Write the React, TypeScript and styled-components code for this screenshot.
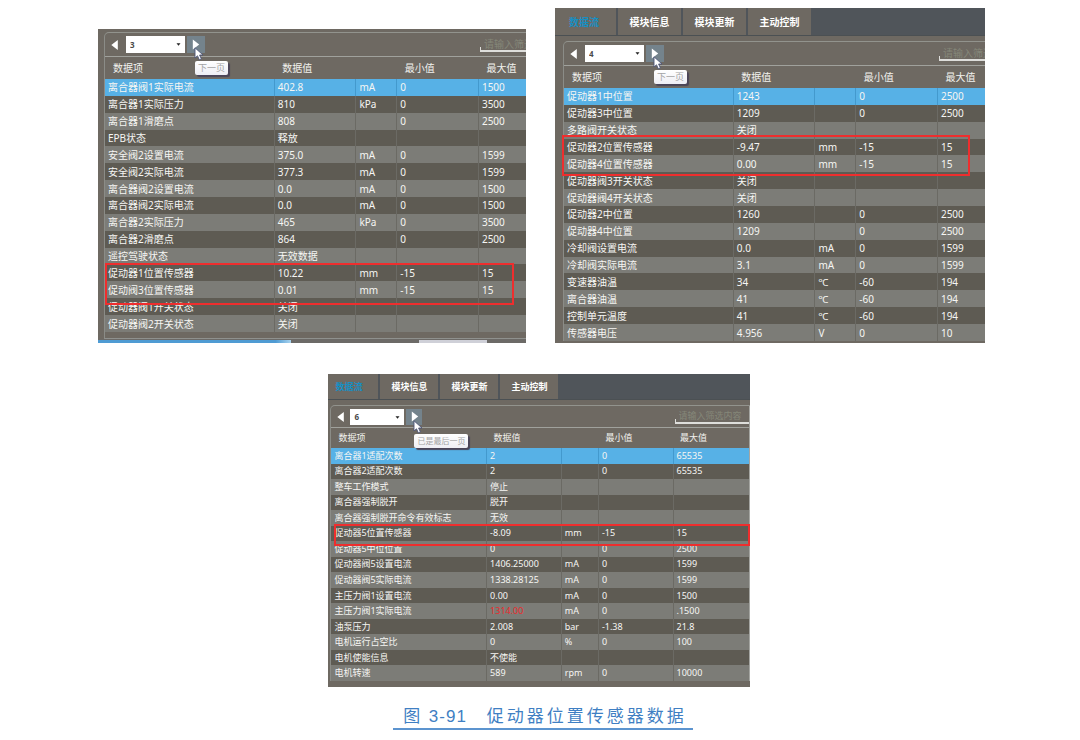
import React from "react";
import styled, { createGlobalStyle, css } from "styled-components";

const GlobalStyle = createGlobalStyle`
  *, *::before, *::after { box-sizing: border-box; }
  body {
    margin: 0;
    background: #ffffff;
    font-family: "Noto Sans", "Noto Sans CJK SC", sans-serif;
  }
`;

type Density = "regular" | "compact";

const metrics = {
  regular: { font: 10, tip: 9, headInset: 8, tabs: 28, tab: 63, firstTab: 61, firstInset: 14, tool: 24, head: 22, control: 17, prev: 21, select: 59, next: 18, search: 46 },
  compact: { font: 9, tip: 8, headInset: 7, tabs: 26, tab: 58, firstTab: 50, firstInset: 7, tool: 22, head: 20, control: 16, prev: 19, select: 54, next: 16, search: 74 },
};

const columns = {
  regular: ["40.2%", "19.4%", "9.7%", "19.4%", "11.3%"],
  compact: ["37.2%", "17.9%", "8.9%", "17.9%", "18.1%"],
};

const Page = styled.main`
  display: flex;
  flex-direction: column;
  align-items: center;
  padding-top: 8px;
`;

const TopRow = styled.div`
  display: grid;
  grid-template-columns: 428fr 430fr;
  gap: 29px;
  align-items: end;
  width: 100%;
  padding: 0 95px 0 98px;
`;

const BottomRow = styled.div`
  width: 39%;
  margin: 31px 2px 0 0;
`;

const Window = styled.section<{ $density: Density }>`
  background: #6e6962;
  color: #f2f2ee;
  font-size: ${(p) => metrics[p.$density].font}px;
  line-height: 14px;
  overflow: hidden;
`;

const TabBar = styled.nav<{ $density: Density }>`
  display: flex;
  gap: 2px;
  height: ${(p) => metrics[p.$density].tabs}px;
  background: #50555a;
  border-bottom: 1px solid #4b5053;
`;

const Tab = styled.button<{ $density: Density; $active?: boolean }>`
  width: ${(p) => metrics[p.$density].tab}px;
  padding: 0;
  border: 0;
  background: #6e6962;
  color: #ffffff;
  font: inherit;
  font-weight: 700;
  ${(p) =>
    p.$active &&
    css`
      width: ${metrics[p.$density].firstTab}px;
      padding-left: ${metrics[p.$density].firstInset}px;
      text-align: left;
      color: #168fc4;
    `}
`;

const Body = styled.div<{ $top: number; $left: number; $bottom: number }>`
  padding: ${(p) => p.$top}px 0 ${(p) => p.$bottom}px ${(p) => p.$left}px;
`;

const Frame = styled.div<{ $closed?: boolean; $edge?: boolean }>`
  border-top: 1px solid #92938d;
  border-left: 1px solid #8b8c87;
  border-top-left-radius: 5px;
  ${(p) => p.$closed && "border-bottom: 1px solid #8f918e; padding-bottom: 6px;"}
  ${(p) => p.$edge && "border-right: 1px solid #a5a6a2;"}
`;

const Toolbar = styled.div<{ $density: Density }>`
  display: flex;
  align-items: center;
  height: ${(p) => metrics[p.$density].tool}px;
  border-bottom: 1px solid #a0a19c;
`;

const PrevButton = styled.button<{ $density: Density }>`
  display: flex;
  align-items: center;
  width: ${(p) => metrics[p.$density].prev}px;
  height: ${(p) => metrics[p.$density].control}px;
  padding: 0 0 0 6px;
  border: 0;
  background: none;
`;

const PageSelect = styled.label`
  position: relative;
  display: flex;
  margin-right: 2px;
`;

const Select = styled.select<{ $density: Density }>`
  appearance: none;
  width: ${(p) => metrics[p.$density].select}px;
  height: ${(p) => metrics[p.$density].control}px;
  padding: 0 4px;
  border: 0;
  border-radius: 0;
  background: #ffffff;
  color: #4a4a4a;
  font: inherit;
  font-size: 8px;
  font-weight: 700;
`;

const Caret = styled.svg`
  position: absolute;
  top: 7px;
  right: 4px;
  pointer-events: none;
`;

const NextWrap = styled.div`
  position: relative;
  display: flex;
`;

const NextButton = styled.button<{ $density: Density }>`
  display: flex;
  align-items: center;
  width: ${(p) => metrics[p.$density].next}px;
  height: ${(p) => metrics[p.$density].control}px;
  padding: 0 0 0 5px;
  border: 0;
  background: #74838c;
`;

const Pointer = styled.svg`
  position: absolute;
  top: 11px;
  left: 7px;
  z-index: 3;
`;

const Tooltip = styled.span<{ $density: Density }>`
  position: absolute;
  top: 25px;
  left: 8px;
  z-index: 2;
  padding: 0 3px;
  border-radius: 2px;
  background: linear-gradient(#ffffff, #eeeef4);
  box-shadow: 2px 2px 1px #4b4558;
  color: #a3a3a3;
  font-size: ${(p) => metrics[p.$density].tip}px;
  line-height: 14px;
  white-space: nowrap;
`;

const Search = styled.input<{ $density: Density }>`
  width: ${(p) => metrics[p.$density].search}px;
  height: 15px;
  margin-left: auto;
  padding: 0 0 0 4px;
  border: 0;
  border-bottom: 2px solid #dededb;
  border-radius: 0;
  background: linear-gradient(#dededb, #dededb) left bottom / 1px 3px no-repeat;
  color: #ffffff;
  font: inherit;
  outline: 0;
  &::placeholder { color: #858779; opacity: 1; }
`;

const TableWrap = styled.div`
  position: relative;
`;

const Table = styled.table<{ $density: Density }>`
  width: 100%;
  height: ${(p) => metrics[p.$density].head + (p.$density === "regular" ? 253 : 233)}px;
  border-collapse: collapse;
  table-layout: fixed;
`;

const HeadCell = styled.th<{ $density: Density }>`
  height: ${(p) => metrics[p.$density].head}px;
  padding: 0 0 0 ${(p) => metrics[p.$density].headInset}px;
  font-weight: 400;
  text-align: left;
  white-space: nowrap;
`;

const Row = styled.tr<{ $selected: boolean }>`
  background: ${(p) => (p.$selected ? "#57b1e6" : "#5e5b53")};
  &:nth-child(odd) { background: ${(p) => (p.$selected ? "#57b1e6" : "#7c7c77")}; }
  td + td { border-left: 1px solid ${(p) => (p.$selected ? "#4399cd" : "#6b6a64")}; }
`;

const Cell = styled.td<{ $alert?: boolean }>`
  padding: 0 0 0 3px;
  color: ${(p) => (p.$alert ? "#ea2a2c" : "#f6f6f3")};
  white-space: nowrap;
`;

const Highlight = styled.div<{ $top: number; $left: number; $right: number; $height: number }>`
  position: absolute;
  top: ${(p) => p.$top}px;
  left: ${(p) => p.$left}px;
  right: ${(p) => p.$right}px;
  height: ${(p) => p.$height}px;
  border: 2px solid #ee2e2e;
  pointer-events: none;
`;

const Taskbar = styled.div`
  display: grid;
  grid-template-columns: 45% 30% 16% 9%;
  height: 4px;
  padding-top: 1px;
  background: #6c6a67;
`;

const TaskProgress = styled.div`
  background: linear-gradient(90deg, #4f9bd3 92%, #a9d3ee);
`;

const TaskThumb = styled.div`
  grid-column: 3;
  background: #cfd0d8;
`;

const Caption = styled.h1`
  margin: 18px 0 0 6px;
  padding: 0 6px 0 10px;
  border-bottom: 2px solid #5c94cf;
  color: #3f7fc3;
  font-family: "Liberation Sans", "Noto Sans CJK SC", sans-serif;
  font-size: 17px;
  font-weight: 400;
  line-height: 23px;
  letter-spacing: 3px;
  white-space: pre;
`;

const FigureNumber = styled.span`
  letter-spacing: 1px;
`;

type Data = [string, string, string?, string?, string?];

const pageThree: Data[] = [
  ["离合器阀1实际电流", "402.8", "mA", "0", "1500"],
  ["离合器1实际压力", "810", "kPa", "0", "3500"],
  ["离合器1滑磨点", "808", "", "0", "2500"],
  ["EPB状态", "释放"],
  ["安全阀2设置电流", "375.0", "mA", "0", "1599"],
  ["安全阀2实际电流", "377.3", "mA", "0", "1599"],
  ["离合器阀2设置电流", "0.0", "mA", "0", "1500"],
  ["离合器阀2实际电流", "0.0", "mA", "0", "1500"],
  ["离合器2实际压力", "465", "kPa", "0", "3500"],
  ["离合器2滑磨点", "864", "", "0", "2500"],
  ["遥控驾驶状态", "无效数据"],
  ["促动器1位置传感器", "10.22", "mm", "-15", "15"],
  ["促动阀3位置传感器", "0.01", "mm", "-15", "15"],
  ["促动器阀1开关状态", "关闭"],
  ["促动器阀2开关状态", "关闭"],
];

const pageFour: Data[] = [
  ["促动器1中位置", "1243", "", "0", "2500"],
  ["促动器3中位置", "1209", "", "0", "2500"],
  ["多路阀开关状态", "关闭"],
  ["促动器2位置传感器", "-9.47", "mm", "-15", "15"],
  ["促动器4位置传感器", "0.00", "mm", "-15", "15"],
  ["促动器阀3开关状态", "关闭"],
  ["促动器阀4开关状态", "关闭"],
  ["促动器2中位置", "1260", "", "0", "2500"],
  ["促动器4中位置", "1209", "", "0", "2500"],
  ["冷却阀设置电流", "0.0", "mA", "0", "1599"],
  ["冷却阀实际电流", "3.1", "mA", "0", "1599"],
  ["变速器油温", "34", "℃", "-60", "194"],
  ["离合器油温", "41", "℃", "-60", "194"],
  ["控制单元温度", "41", "℃", "-60", "194"],
  ["传感器电压", "4.956", "V", "0", "10"],
];

const pageSix: Data[] = [
  ["离合器1适配次数", "2", "", "0", "65535"],
  ["离合器2适配次数", "2", "", "0", "65535"],
  ["整车工作模式", "停止"],
  ["离合器强制脱开", "脱开"],
  ["离合器强制脱开命令有效标志", "无效"],
  ["促动器5位置传感器", "-8.09", "mm", "-15", "15"],
  ["促动器5中位位置", "0", "", "0", "2500"],
  ["促动器阀5设置电流", "1406.25000", "mA", "0", "1599"],
  ["促动器阀5实际电流", "1338.28125", "mA", "0", "1599"],
  ["主压力阀1设置电流", "0.00", "mA", "0", "1500"],
  ["主压力阀1实际电流", "1314.00", "mA", "0", ".1500"],
  ["油泵压力", "2.008", "bar", "-1.38", "21.8"],
  ["电机运行占空比", "0", "%", "0", "100"],
  ["电机使能信息", "不使能"],
  ["电机转速", "589", "rpm", "0", "10000"],
];

const tabNames = ["数据流", "模块信息", "模块更新", "主动控制"];
const headings = ["数据项", "数据值", "", "最小值", "最大值"];

interface ViewerProps {
  page: string;
  rows: Data[];
  density: Density;
  tip: string;
  mark: { top: number; left: number; right: number; height: number };
  inset: { top: number; left: number; bottom: number };
  tabs?: boolean;
  closed?: boolean;
  edge?: boolean;
  alertRow?: number;
}

function Viewer({ page, rows, density, tip, mark, inset, tabs, closed, edge, alertRow }: ViewerProps) {
  return (
    <Window $density={density}>
      {tabs && (
        <TabBar $density={density}>
          {tabNames.map((name, i) => (
            <Tab key={name} type="button" $density={density} $active={i === 0}>
              {name}
            </Tab>
          ))}
        </TabBar>
      )}
      <Body $top={inset.top} $left={inset.left} $bottom={inset.bottom}>
        <Frame $closed={closed} $edge={edge}>
          <Toolbar $density={density}>
            <PrevButton type="button" aria-label="上一页" $density={density}>
              <svg width="7" height="10" viewBox="0 0 7 10">
                <path d="M6.8 0V10L0.3 5Z" fill="#ffffff" />
              </svg>
            </PrevButton>
            <PageSelect>
              <Select aria-label="页码" defaultValue={page} $density={density}>
                {["1", "2", "3", "4", "5", "6"].map((n) => (
                  <option key={n}>{n}</option>
                ))}
              </Select>
              <Caret width="5" height="3" viewBox="0 0 5 3">
                <path d="M0.5 0.3H4.5L2.5 2.7Z" fill="#222222" />
              </Caret>
            </PageSelect>
            <NextWrap>
              <NextButton type="button" aria-label="下一页" $density={density}>
                <svg width="8" height="11" viewBox="0 0 8 11">
                  <path d="M0.8 0.5V10.5L7.2 5.5Z" fill="#ffffff" />
                </svg>
              </NextButton>
              <Pointer width="11" height="14" viewBox="0 0 11 14">
                <path
                  d="M1 0.8V11L3.5 8.8L5.3 12.8L7.4 11.9L5.6 8H9Z"
                  fill="#ffffff"
                  stroke="#4c5578"
                  strokeWidth="0.9"
                />
              </Pointer>
              <Tooltip role="tooltip" $density={density}>{tip}</Tooltip>
            </NextWrap>
            <Search type="text" aria-label="筛选" placeholder="请输入筛选内容" $density={density} />
          </Toolbar>
          <TableWrap>
            <Table $density={density}>
              <colgroup>
                {columns[density].map((width, i) => (
                  <col key={i} style={{ width }} />
                ))}
              </colgroup>
              <thead>
                <tr>
                  {headings.map((text, i) => (
                    <HeadCell key={i} scope="col" $density={density}>
                      {text}
                    </HeadCell>
                  ))}
                </tr>
              </thead>
              <tbody>
                {rows.map((row, r) => (
                  <Row key={row[0]} $selected={r === 0}>
                    {headings.map((_, c) => (
                      <Cell key={c} $alert={r === alertRow && c === 1}>
                        {row[c]}
                      </Cell>
                    ))}
                  </Row>
                ))}
              </tbody>
            </Table>
            <Highlight $top={mark.top} $left={mark.left} $right={mark.right} $height={mark.height} />
          </TableWrap>
        </Frame>
      </Body>
      {closed && (
        <Taskbar>
          <TaskProgress />
          <TaskThumb />
        </Taskbar>
      )}
    </Window>
  );
}

export default function App() {
  return (
    <Page>
      <GlobalStyle />
      <TopRow>
        <Viewer
          page="3"
          rows={pageThree}
          density="regular"
          tip="下一页"
          closed
          inset={{ top: 3, left: 6, bottom: 0 }}
          mark={{ top: 206, left: 0, right: 12, height: 42 }}
        />
        <Viewer
          page="4"
          rows={pageFour}
          density="regular"
          tip="下一页"
          tabs
          inset={{ top: 5, left: 8, bottom: 2 }}
          mark={{ top: 69, left: -2, right: 15, height: 41 }}
        />
      </TopRow>
      <BottomRow>
        <Viewer
          page="6"
          rows={pageSix}
          density="compact"
          tip="已是最后一页"
          tabs
          edge
          alertRow={10}
          inset={{ top: 5, left: 2, bottom: 6 }}
          mark={{ top: 96, left: 3, right: -1, height: 22 }}
        />
      </BottomRow>
      <Caption>
        图<FigureNumber> 3-91</FigureNumber>　促动器位置传感器数据
      </Caption>
    </Page>
  );
}
